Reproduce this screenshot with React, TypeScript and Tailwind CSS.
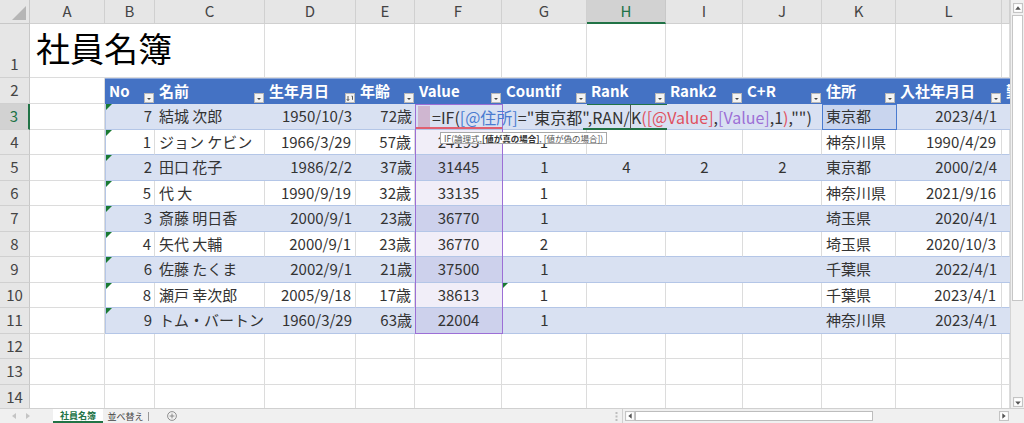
import React from 'react';

type Row = {
  no: number;
  name: string;
  birth: string;
  age: string;
  value: string;
  countif: string;
  rank: string;
  rank2: string;
  cr: string;
  addr: string;
  join: string;
};

const data: Row[] = [
  { no: 7, name: '結城 次郎', birth: '1950/10/3', age: '72歳', value: '', countif: '', rank: '', rank2: '', cr: '', addr: '東京都', join: '2023/4/1' },
  { no: 1, name: 'ジョン ケビン', birth: '1966/3/29', age: '57歳', value: '24193', countif: '1', rank: '', rank2: '', cr: '', addr: '神奈川県', join: '1990/4/29' },
  { no: 2, name: '田口 花子', birth: '1986/2/2', age: '37歳', value: '31445', countif: '1', rank: '4', rank2: '2', cr: '2', addr: '東京都', join: '2000/2/4' },
  { no: 5, name: '代 大', birth: '1990/9/19', age: '32歳', value: '33135', countif: '1', rank: '', rank2: '', cr: '', addr: '神奈川県', join: '2021/9/16' },
  { no: 3, name: '斎藤 明日香', birth: '2000/9/1', age: '23歳', value: '36770', countif: '1', rank: '', rank2: '', cr: '', addr: '埼玉県', join: '2020/4/1' },
  { no: 4, name: '矢代 大輔', birth: '2000/9/1', age: '23歳', value: '36770', countif: '2', rank: '', rank2: '', cr: '', addr: '埼玉県', join: '2020/10/3' },
  { no: 6, name: '佐藤 たくま', birth: '2002/9/1', age: '21歳', value: '37500', countif: '1', rank: '', rank2: '', cr: '', addr: '千葉県', join: '2022/4/1' },
  { no: 8, name: '瀬戸 幸次郎', birth: '2005/9/18', age: '17歳', value: '38613', countif: '1', rank: '', rank2: '', cr: '', addr: '千葉県', join: '2023/4/1' },
  { no: 9, name: 'トム・バートン', birth: '1960/3/29', age: '63歳', value: '22004', countif: '1', rank: '', rank2: '', cr: '', addr: '神奈川県', join: '2023/4/1' },
];

const letters = ['A', 'B', 'C', 'D', 'E', 'F', 'G', 'H', 'I', 'J', 'K', 'L', ''];
const headers = ['No', '名前', '生年月日', '年齢', 'Value', 'Countif', 'Rank', 'Rank2', 'C+R', '住所', '入社年月日', '勤'];

function FilterButton({ sorted }: { sorted?: boolean }) {
  return (
    <svg className="absolute right-[1px] bottom-[1px]" width="10" height="10" viewBox="0 0 10 10">
      <rect x="0.5" y="0.5" width="9" height="9" fill="#f3f3f3" stroke="#b8b8b8" />
      {sorted ? (
        <>
          <path d="M3 3v4.5M1.8 6.2 3 7.6 4.2 6.2" stroke="#444" strokeWidth="0.9" fill="none" />
          <path d="M6.5 3.2h1v3.6" stroke="#444" strokeWidth="0.9" fill="none" />
        </>
      ) : (
        <path d="M3 5h4L5 7z" fill="#444" />
      )}
    </svg>
  );
}

function GreenMark() {
  return <div className="absolute top-0 left-0 w-0 h-0 border-t-[6px] border-r-[6px] border-t-[#1a7a33] border-r-transparent" />;
}

function RowHead({ n, active, tall }: { n: number; active?: boolean; tall?: boolean }) {
  return (
    <div
      className={`flex justify-center border-b border-[#d0d0d0] text-[15px] ${tall ? 'items-end pb-[2px]' : 'items-center'} ${
        active ? 'bg-[#d2d2d2] text-[#217346] border-r-2 border-r-[#217346]' : 'bg-[#e6e6e6] text-[#444] border-r border-r-[#c8c8c8]'
      }`}
    >
      {n}
    </div>
  );
}

function Empty() {
  return <div className="border-r border-b border-[#dcdcdc]" />;
}

function DataRow({ r, i }: { r: Row; i: number }) {
  const band = i % 2 === 0;
  const cell = band ? 'bg-[#d9e1f2] border-b border-[#b4c6e7]' : 'bg-white border-r border-b border-r-[#dcdcdc] border-b-[#b4c6e7]';
  const fBg = i === 0 ? 'bg-[#d9e1f2]' : band ? 'bg-[#cdd1ec]' : 'bg-[#f1eef8]';
  return (
    <>
      <RowHead n={i + 3} active={i === 0} />
      <Empty />
      <div className={`relative flex items-center justify-end pr-[3px] border-l border-l-[#b4c6e7] ${cell}`}>
        <GreenMark />
        {r.no}
      </div>
      <div className={`flex items-center pl-[4px] whitespace-nowrap ${cell}`}>{r.name}</div>
      <div className={`flex items-center justify-end pr-[4px] ${cell}`}>{r.birth}</div>
      <div className={`flex items-center justify-end pr-[3px] ${cell}`}>{r.age}</div>
      <div className={`flex items-center justify-center border-b border-b-[#b4c6e7] ${fBg}`}>{r.value}</div>
      <div className={`relative flex items-center justify-center ${cell}`}>
        {i === 7 && <GreenMark />}
        {r.countif}
      </div>
      <div className={`flex items-center justify-center ${cell}`}>{r.rank}</div>
      <div className={`flex items-center justify-center ${cell}`}>{r.rank2}</div>
      <div className={`flex items-center justify-center ${cell}`}>{r.cr}</div>
      <div className={`flex items-center pl-[4px] whitespace-nowrap ${i === 0 ? 'bg-[#c9d5ee] border-b border-[#b4c6e7]' : cell}`}>{r.addr}</div>
      <div className={`flex items-center justify-end pr-[5px] ${cell}`}>{r.join}</div>
      <div className={cell} />
    </>
  );
}

function Sheet() {
  return (
    <div className="grid grid-cols-[30px_75px_50px_110px_91px_59px_87px_85px_79px_77px_79px_74px_106px_8px] grid-rows-[24px_54px_26px_repeat(12,25.5px)] text-[15px] text-[#333]">
      <div className="relative bg-[#e6e6e6] border-r border-b border-[#c8c8c8]">
        <svg className="absolute right-[3px] bottom-[3px]" width="14" height="14" viewBox="0 0 14 14">
          <path d="M14 0v14H0z" fill="#b6b6b6" />
        </svg>
      </div>
      {letters.map((l, k) => (
        <div
          key={k}
          className={`flex items-center justify-center text-[15px] ${
            l === 'H'
              ? 'bg-[#d2d2d2] text-[#217346] border-r border-r-[#c8c8c8] border-b-2 border-b-[#217346]'
              : 'bg-[#e6e6e6] text-[#444] border-r border-b border-[#d0d0d0]'
          }`}
        >
          {l}
        </div>
      ))}

      <RowHead n={1} tall />
      <div className="col-span-3 flex items-end pl-[6px] pb-[12px] border-r border-b border-[#dcdcdc]">
        <span className="text-[34px] leading-none text-black whitespace-nowrap">社員名簿</span>
      </div>
      {Array.from({ length: 10 }).map((_, k) => (
        <Empty key={k} />
      ))}

      <RowHead n={2} />
      <Empty />
      {headers.map((h, k) => (
        <div key={h} className="relative flex items-center pl-[4px] bg-[#4472c4] text-white font-bold whitespace-nowrap overflow-hidden border-t border-t-[#8ea9db]">
          {h}
          {k < 11 && <FilterButton sorted={k === 2} />}
        </div>
      ))}

      {data.map((r, i) => (
        <DataRow key={i} r={r} i={i} />
      ))}

      {[12, 13, 14].map((n) => (
        <React.Fragment key={n}>
          <RowHead n={n} />
          {Array.from({ length: 13 }).map((_, k) => (
            <Empty key={k} />
          ))}
        </React.Fragment>
      ))}
    </div>
  );
}

function Overlays() {
  return (
    <>
      <div className="absolute left-[418px] top-[106px] w-[12px] h-[22px] bg-[#cfb6d0]" />
      <div className="absolute left-[415px] top-[104px] w-[88px] h-[230px] border border-[#9c6fd6]" />
      <div className="absolute left-[416px] top-[127px] w-[86px] h-[2px] bg-[#e06070]" />
      <div className="absolute left-[822px] top-[104px] w-[75px] h-[26px] border border-[#4a7bd0]" />
      <div className="absolute left-[587px] top-[104px] w-[80px] h-[1px] bg-[#217346]" />
      <div className="absolute left-[583px] top-[128px] w-[84px] h-[2px] bg-[#217346]" />
      <div className="absolute left-[432px] top-[104px] h-[25px] flex items-center whitespace-nowrap text-[16px] text-[#333]">
        <span>=IF(</span>
        <span className="text-[#4a7bd0]">[@住所]</span>
        <span>="東京都",RAN/</span>
        <span className="border-l border-[#555]">K</span>
        <span className="text-[#e0505e]">(</span>
        <span className="text-[#e0505e]">[@Value]</span>
        <span>,</span>
        <span className="text-[#9c6fd6]">[Value]</span>
        <span>,1</span>
        <span className="text-[#e0505e]">)</span>
        <span>,"")</span>
      </div>
      <div className="absolute left-[440px] top-[132px] h-[12px] px-[3px] flex items-center bg-white border border-[#a8a8a8] text-[8.5px] leading-none text-[#555] whitespace-nowrap">
        IF(論理式, <b className="text-[#333]">[値が真の場合]</b>, [値が偽の場合])
      </div>
    </>
  );
}

function ArrowBox({ dir }: { dir: 'up' | 'down' | 'left' | 'right' }) {
  const d = {
    up: 'M2 6h5L4.5 3z',
    down: 'M2 4h5L4.5 7z',
    left: 'M6 2v5L3 4.5z',
    right: 'M3 2v5L6 4.5z',
  }[dir];
  return (
    <svg width="10" height="10" viewBox="0 0 9 9" className="shrink-0">
      <rect x="0.5" y="0.5" width="8" height="8" fill="#fff" stroke="#c4c4c4" />
      <path d={d} fill="#555" />
    </svg>
  );
}

function VScroll() {
  return (
    <div className="w-[14px] h-[408px] bg-[#f0f0f0] border-l border-[#d4d4d4] flex flex-col items-center pt-[3px] pb-[1px]">
      <ArrowBox dir="up" />
      <div className="mt-[2px] w-[11px] h-[286px] bg-white border border-[#c6c6c6]" />
      <div className="flex-1" />
      <ArrowBox dir="down" />
    </div>
  );
}

function BottomBar() {
  return (
    <div className="h-[15px] flex items-stretch bg-[#f0f0f0] border-t border-[#d0d0d0] text-[9px] leading-none">
      <div className="w-[53px] flex items-center gap-[8px] pl-[12px]">
        <svg width="5" height="6" viewBox="0 0 5 6"><path d="M4 0v6L0 3z" fill="#c4c4c4" /></svg>
        <svg width="5" height="6" viewBox="0 0 5 6"><path d="M1 0v6l4-3z" fill="#c4c4c4" /></svg>
      </div>
      <div className="w-[50px] flex items-center justify-center bg-white border-b-2 border-[#217346] text-[#217346] font-bold">社員名簿</div>
      <div className="w-[45px] flex items-center justify-center text-[#444]">並べ替え</div>
      <div className="flex items-center">
        <div className="w-[1px] h-[9px] bg-[#999]" />
      </div>
      <div className="w-[45px] flex items-center justify-center">
        <svg width="10" height="10" viewBox="0 0 10 10">
          <circle cx="5" cy="5" r="4.4" fill="none" stroke="#777" strokeWidth="0.8" />
          <path d="M5 2.6v4.8M2.6 5h4.8" stroke="#777" strokeWidth="0.8" />
        </svg>
      </div>
      <div className="flex-1" />
      <div className="w-[12px] flex items-center justify-center">
        <svg width="3" height="9" viewBox="0 0 3 9">
          <rect x="0.5" y="0" width="2" height="2" fill="#bdbdbd" />
          <rect x="0.5" y="3.5" width="2" height="2" fill="#bdbdbd" />
          <rect x="0.5" y="7" width="2" height="2" fill="#bdbdbd" />
        </svg>
      </div>
      <div className="w-[388px] flex items-center border-l border-[#d0d0d0] pl-[2px] pr-[1px]">
        <ArrowBox dir="left" />
        <div className="w-[238px] h-[10px] bg-white border border-[#bdbdbd]" />
        <div className="flex-1" />
        <ArrowBox dir="right" />
      </div>
      <div className="w-[14px]" />
    </div>
  );
}

export default function App() {
  return (
    <div className="w-[1024px] h-[423px] overflow-hidden bg-white flex flex-col font-['Noto_Sans_CJK_JP','Noto_Sans',sans-serif]">
      <div className="flex h-[408px] shrink-0">
        <div className="relative w-[1010px] h-[408px] overflow-hidden">
          <Sheet />
          <Overlays />
        </div>
        <VScroll />
      </div>
      <BottomBar />
    </div>
  );
}
